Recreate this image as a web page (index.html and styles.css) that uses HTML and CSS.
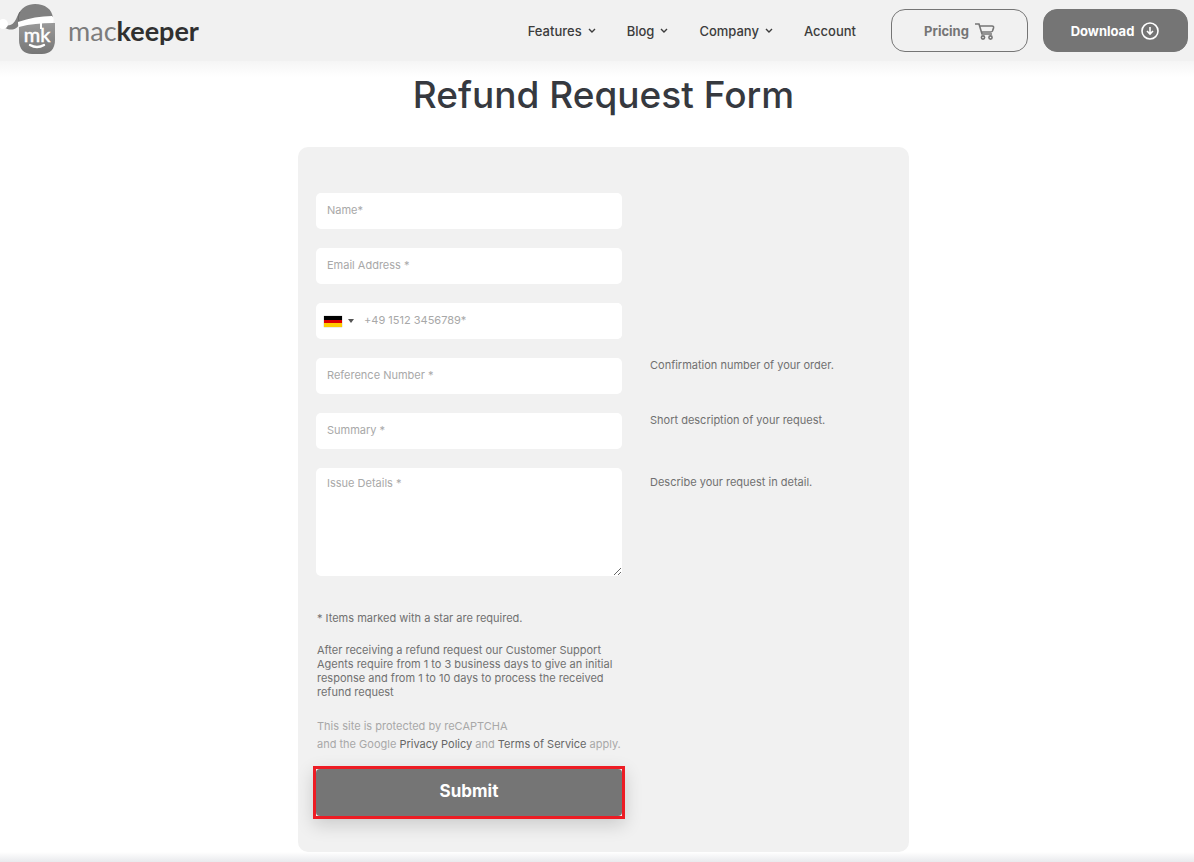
FILE: index.html
```html
<!DOCTYPE html>
<html lang="en">
<head>
    <meta charset="UTF-8">
    <meta name="viewport" content="width=device-width, initial-scale=1.0">
    <title>Refund Request Form</title>
    <link rel="stylesheet" href="styles.css">
</head>
<body>
    <header class="header">
        <a class="logo" href="#">
            <svg class="logo-icon" viewBox="0 0 60 60" aria-hidden="true">
                <defs>
                    <linearGradient id="face" x1="0" y1="0" x2="0" y2="1">
                        <stop offset="0" stop-color="#9a9a9a"/>
                        <stop offset="1" stop-color="#767676"/>
                    </linearGradient>
                </defs>
                <path d="M19 22h36v17c0 9-5 14-13 14H32c-8 0-13-5-13-14z" fill="url(#face)"/>
                <path d="M4 24c8 2 11-3 13-8C21 6 28 3 35 3c10 0 17 5 18 14l-34 6c-1 5-9 8-15 3z" fill="#808080"/>
                <path d="M20 11c-2 4-2 6-1 9" fill="none" stroke="#686868" stroke-width="1"/>
                <path d="M18 21c11-4 23-6 34-6 2 2 2 4 1 7-12 0-23 1-34 4-1-2-1-3-1-5z" fill="#fff"/>
                <path d="M41 20v8" stroke="#fff" stroke-width="2"/>
                <circle cx="3" cy="23" r="5" fill="#fff"/>
                <text x="37" y="41" text-anchor="middle" class="logo-mk">mk</text>
                <path d="M30 44q7 4 14 0" fill="none" stroke="#fff" stroke-width="2.4" stroke-linecap="round"/>
            </svg>
            <span class="logo-text">mac<b>keeper</b></span>
        </a>
        <nav class="nav">
            <a href="#">Features <svg class="chevron" viewBox="0 0 8 6"><path d="M1 1l3 3 3-3"/></svg></a>
            <a href="#">Blog <svg class="chevron" viewBox="0 0 8 6"><path d="M1 1l3 3 3-3"/></svg></a>
            <a href="#">Company <svg class="chevron" viewBox="0 0 8 6"><path d="M1 1l3 3 3-3"/></svg></a>
            <a href="#">Account</a>
        </nav>
        <div class="actions">
            <a class="btn btn-pricing" href="#">Pricing
                <svg class="btn-icon" viewBox="0 0 20 20"><path d="M0 3h4l3 10h10M4.500 5h12.500q2 0 1.500 2l-1 3q-.5 1-2 1H6.500"/><circle cx="8" cy="16.500" r="1.600"/><circle cx="15.500" cy="16.500" r="1.600"/></svg>
            </a>
            <a class="btn btn-download" href="#">Download
                <svg class="btn-icon" viewBox="0 0 20 20"><circle cx="10" cy="10" r="8"/><path d="M10 6v7M7 10l3 3 3-3"/></svg>
            </a>
        </div>
    </header>

    <main class="main">
        <h1>Refund Request Form</h1>
        <form class="card">
            <div class="row">
                <input type="text" id="name" aria-label="Name" placeholder="Name*">
            </div>
            <div class="row">
                <input type="email" id="email" aria-label="Email Address" placeholder="Email Address *">
            </div>
            <div class="row">
                <div class="phone">
                    <button type="button" class="country" aria-label="Country: Germany">
                        <span class="flag"></span>
                        <span class="arrow"></span>
                    </button>
                    <input type="tel" id="phone" aria-label="Phone" placeholder="+49 1512 3456789*">
                </div>
            </div>
            <div class="row">
                <input type="text" id="reference" aria-label="Reference Number" placeholder="Reference Number *">
                <label class="hint" for="reference">Confirmation number of your order.</label>
            </div>
            <div class="row">
                <input type="text" id="summary" aria-label="Summary" placeholder="Summary *">
                <label class="hint" for="summary">Short description of your request.</label>
            </div>
            <div class="row">
                <textarea id="details" aria-label="Issue Details" placeholder="Issue Details *"></textarea>
                <label class="hint hint-details" for="details">Describe your request in detail.</label>
            </div>
            <div class="form-bottom">
                <p>* Items marked with a star are required.</p>
                <p>After receiving a refund request our Customer Support<br>Agents require from 1 to 3 business days to give an initial<br>response and from 1 to 10 days to process the received<br>refund request</p>
                <p class="captcha">This site is protected by reCAPTCHA<br>and the Google <a href="#">Privacy Policy</a> and <a href="#">Terms of Service</a> apply.</p>
                <div class="submit-frame">
                    <button type="submit" class="submit">Submit</button>
                </div>
            </div>
        </form>
    </main>
    <div class="page-end"></div>
</body>
</html>
```
FILE: styles.css
```css
* {
    box-sizing: border-box;
}

body {
    margin: 0;
    font-family: Inter, "Liberation Sans", sans-serif;
    font-size: 11px;
    line-height: 14px;
    color: #707070;
    background: #fff;
}

a {
    color: inherit;
    text-decoration: none;
}

p {
    margin: 0;
}

.header {
    display: flex;
    align-items: center;
    height: 61px;
    padding-right: 6px;
    background: #f1f1f1;
}

.logo {
    display: flex;
    align-items: center;
    gap: 8px;
    margin-right: auto;
}

.logo-icon {
    width: 60px;
    height: 60px;
}

.logo-mk {
    font-family: Lato, sans-serif;
    font-size: 20px;
    fill: #fff;
    stroke: #fff;
    stroke-width: 0.5;
}

.logo-text {
    font-family: Lato, sans-serif;
    font-size: 27px;
    line-height: 32px;
    color: #7c7c7c;
}

.logo-text b {
    font-weight: 700;
    color: #303030;
}

.nav {
    display: flex;
    gap: 31px;
    margin-right: 35px;
    font-size: 13px;
    font-weight: 500;
    line-height: 16px;
    color: #3c3c3c;
}

.nav a {
    display: flex;
    align-items: center;
    gap: 6px;
}

.chevron {
    width: 8px;
    height: 6px;
    fill: none;
    stroke: #3c3c3c;
    stroke-width: 1.4;
}

.actions {
    display: flex;
    gap: 15px;
}

.btn {
    display: flex;
    align-items: center;
    justify-content: center;
    gap: 6px;
    height: 43px;
    border: 1px solid #757575;
    border-radius: 14px;
    font-size: 13px;
    font-weight: 700;
}

.btn-pricing {
    width: 137px;
    color: #757575;
}

.btn-download {
    width: 145px;
    color: #fff;
    background: #757575;
}

.btn-icon {
    width: 20px;
    height: 20px;
    fill: none;
    stroke: currentColor;
    stroke-width: 1.6;
}

.main {
    padding: 10px 0 0 13px;
    background: linear-gradient(#f5f5f5, #fff 16px);
}

h1 {
    margin: 0 0 28px;
    font-size: 37px;
    font-weight: 500;
    line-height: 48px;
    text-align: center;
    color: #36393f;
}

.card {
    display: flex;
    flex-direction: column;
    gap: 19px;
    max-width: 611px;
    margin: 0 auto;
    padding: 46px 18px 36px;
    border-radius: 10px;
    background: #f1f1f1;
}

.row {
    display: grid;
    grid-template-columns: 306px 1fr;
    column-gap: 28px;
    align-items: start;
}

input,
textarea {
    display: block;
    width: 100%;
    height: 36px;
    padding: 0 11px 2px;
    border: none;
    border-radius: 5px;
    font: inherit;
    color: #333;
    background: #fff;
}

textarea {
    height: 108px;
    padding: 8px 11px;
    resize: vertical;
}

::placeholder {
    color: #a8a8a8;
}

.phone {
    display: flex;
    border-radius: 5px;
    background: #fff;
}

.phone input {
    flex: 1;
    padding-left: 10px;
}

.country {
    display: flex;
    align-items: center;
    gap: 6px;
    padding: 0 0 0 8px;
    border: none;
    background: none;
}

.flag {
    width: 18px;
    height: 11px;
    background: linear-gradient(#000 0 4px, #d00 4px 7px, #fc0 7px);
    box-shadow: 0 0 1px #888;
}

.arrow {
    border: 3px solid transparent;
    border-top: 4px solid #555;
    border-bottom: none;
}

.hint-details {
    margin-top: 7px;
}

.form-bottom {
    display: flex;
    flex-direction: column;
    gap: 18px;
    width: 306px;
    padding-top: 16px;
}

.form-bottom p {
    padding-left: 1px;
    white-space: nowrap;
}

.form-bottom .captcha {
    line-height: 18px;
    color: #a8a8a8;
}

.captcha a {
    color: #666;
}

.submit-frame {
    margin: -5px -3px -3px;
    border: 3px solid #ed1c24;
    background: #f1f1f1;
    box-shadow: 0 6px 18px rgba(0, 0, 0, 0.16);
}

.submit {
    display: block;
    width: 100%;
    height: 47px;
    padding: 0 0 4px;
    border: none;
    border-radius: 4px;
    font: 700 17px/20px Inter, "Liberation Sans", sans-serif;
    color: #fff;
    background: #757575;
}

.page-end {
    height: 10px;
    background: linear-gradient(#fff, #e9eaed);
}
```
